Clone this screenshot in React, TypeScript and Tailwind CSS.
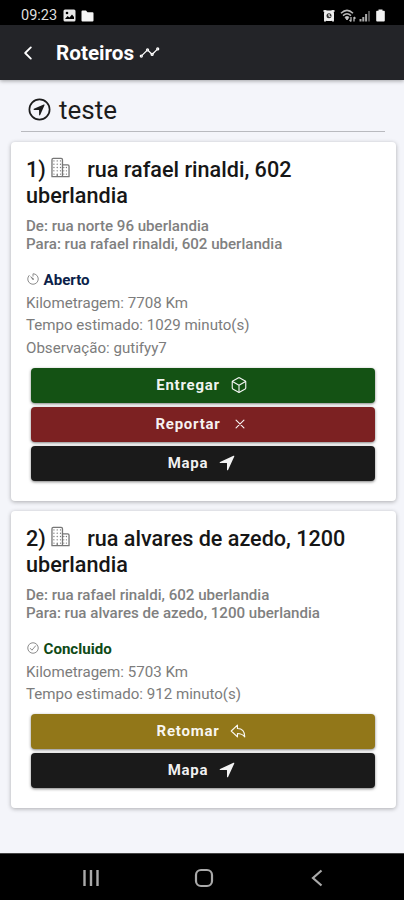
import clsx from "clsx";
import React from "react";
import {
  IoAnalyticsOutline,
  IoArrowUndoOutline,
  IoBusinessOutline,
  IoCheckmarkCircleOutline,
  IoChevronBack,
  IoCloseOutline,
  IoCubeOutline,
  IoNavigate,
  IoNavigateCircleOutline,
  IoTimerOutline,
} from "react-icons/io5";

interface IAction {
  label: string;
  icon: React.ReactNode;
  className: string;
}

interface IStop {
  address: string;
  from: string;
  to: string;
  status: string;
  statusIcon: React.ReactNode;
  statusClassName: string;
  details: string[];
  actions: IAction[];
}

const mapAction: IAction = {
  label: "Mapa",
  icon: <IoNavigate className="size-[18px]" />,
  className: "bg-[#1a1a1a]",
};

const stops: IStop[] = [
  {
    address: "rua rafael rinaldi, 602 uberlandia",
    from: "rua norte 96 uberlandia",
    to: "rua rafael rinaldi, 602 uberlandia",
    status: "Aberto",
    statusIcon: <IoTimerOutline className="-mt-0.5 size-[14px]" />,
    statusClassName: "text-[#0c1f4a]",
    details: [
      "Kilometragem: 7708 Km",
      "Tempo estimado: 1029 minuto(s)",
      "Observação: gutifyy7",
    ],
    actions: [
      {
        label: "Entregar",
        icon: <IoCubeOutline className="size-[18px]" />,
        className: "bg-[#145214]",
      },
      {
        label: "Reportar",
        icon: <IoCloseOutline className="size-[18px]" />,
        className: "bg-[#7c2122]",
      },
      mapAction,
    ],
  },
  {
    address: "rua alvares de azedo, 1200 uberlandia",
    from: "rua rafael rinaldi, 602 uberlandia",
    to: "rua alvares de azedo, 1200 uberlandia",
    status: "Concluido",
    statusIcon: <IoCheckmarkCircleOutline className="-mt-0.5 size-[14px]" />,
    statusClassName: "text-[#0e4a16]",
    details: ["Kilometragem: 5703 Km", "Tempo estimado: 912 minuto(s)"],
    actions: [
      {
        label: "Retomar",
        icon: <IoArrowUndoOutline className="size-[18px]" />,
        className: "bg-[#927719]",
      },
      mapAction,
    ],
  },
];

function StatusBar() {
  return (
    <div className="flex h-[25px] items-center bg-black pl-[21px] pr-[19px] pt-[6px] text-[#dedede]">
      <span className="w-[37px] whitespace-nowrap text-[14.5px] leading-[15px]">
        09:23
      </span>
      <svg className="ml-[5px]" width="13" height="13" viewBox="0 0 13 13">
        <rect x="0.5" y="0.5" width="12" height="12" rx="1.5" fill="#e6e6e6" />
        <circle cx="4" cy="4" r="1.3" fill="#000" />
        <path d="M2 10l2.5-3 2 1.5L9 5.5l2 2.5v2z" fill="#000" />
      </svg>
      <svg className="ml-[5px]" width="13" height="12" viewBox="0 0 13 12">
        <path
          d="M0.5 1.5q0-1 1-1H5l1.5 1.7h5q1 0 1 1v7.3q0 1-1 1h-10q-1 0-1-1z"
          fill="#f5f5f5"
        />
      </svg>
      <div className="ml-auto flex items-center">
        <svg width="12" height="13" viewBox="0 0 12 13">
          <path d="M0.500 1h3v2h-3zM8.500 1h3v2h-3zM1 10h2v2.500H1zM9 10h2v2.500H9z" fill="#ddd" />
          <rect x="1" y="1.500" width="10" height="10.500" rx="3" fill="#eee" />
          <circle cx="6" cy="6.800" r="2.500" fill="#333" />
          <path d="M6 5v2l1.500 0.800" stroke="#eee" strokeWidth="1.200" fill="none" />
        </svg>
        <svg className="ml-[5px]" width="16" height="14" viewBox="0 0 16 14" fill="none" stroke="#bbb">
          <path d="M1 4.200Q7 -1.500 13 4.200M3 6.600Q7 3 11 6.600" strokeWidth="1.500" />
          <path d="M5 8.200Q7 6.800 9 8.200L7 11z" fill="#ccc" />
          <path d="M11 8v4.500M9.500 11l1.500 1.500M14 12.500V8M15.500 9.500L14 8" strokeWidth="1.300" />
        </svg>
        <svg className="ml-[3px]" width="12" height="12" viewBox="0 0 12 12">
          <path d="M0.500 9h2v2.500h-2zM3.300 7h2v4.500h-2zM6.100 4h2v7.500h-2z" fill="#aaa" />
          <path d="M9 1h2v10.500H9z" fill="#555" />
        </svg>
        <svg className="ml-[5px]" width="9" height="13" viewBox="0 0 9 13">
          <path d="M2.500 0.500h4v1.300H8q0.800 0 0.800 0.800v9q0 0.900-0.900 0.900H1.100q-0.900 0-0.900-0.900v-9q0-0.800 0.800-0.800h1.500z" fill="#f2f2f2" />
        </svg>
      </div>
    </div>
  );
}

function Header() {
  return (
    <header className="relative z-10 flex h-[55px] items-center bg-[#232428] pl-[18px] text-white shadow-[0_1px_4px_rgba(0,0,0,0.35)]">
      <IoChevronBack className="size-5" />
      <h1 className="ml-[18px] pt-px text-[20.7px] font-bold leading-[22px]">
        Roteiros
      </h1>
      <IoAnalyticsOutline className="ml-[5px] size-[21px]" />
    </header>
  );
}

function StopCard({ stop, index }: { stop: IStop; index: number }) {
  return (
    <section className="rounded-[4px] bg-white px-[15px] pb-[20px] pt-[15px] shadow-[0_1px_4px_rgba(0,0,0,0.3)]">
      <h2 className="pr-4 text-[21.6px] font-medium leading-[26px] text-[#161616]">
        {`${index + 1}) `}
        <IoBusinessOutline className="-ml-px mr-[16px] inline-block size-[21px] align-[-1px] text-[#777]" />
        {stop.address}
      </h2>
      <div className="mt-[8px] whitespace-nowrap text-[15.1px] font-medium leading-[18px] text-[#808080]">
        <p>{`De: ${stop.from}`}</p>
        <p>{`Para: ${stop.to}`}</p>
      </div>
      <div className="mt-[16px] text-[15.1px] leading-[22.700px] text-[#7c7c7c]">
        <p className="flex items-center gap-[3.500px]">
          {stop.statusIcon}
          <span className={clsx("font-bold", stop.statusClassName)}>
            {stop.status}
          </span>
        </p>
        {stop.details.map((detail) => (
          <p key={detail}>{detail}</p>
        ))}
      </div>
      <div className="ml-[5px] mr-[6px] mt-[8px] flex flex-col gap-[4px]">
        {stop.actions.map((action) => (
          <button
            key={action.label}
            className={clsx(
              "flex h-[35px] items-center justify-center gap-[10px] rounded-[4px] pr-[2px] text-[15px] font-bold tracking-[0.75px] text-white/95 shadow-[0_1px_3px_rgba(0,0,0,0.5)]",
              action.className
            )}
          >
            {action.label}
            {action.icon}
          </button>
        ))}
      </div>
    </section>
  );
}

function NavigationBar() {
  return (
    <nav className="mt-auto flex h-[47px] items-center justify-between border-t border-[#444] bg-black pl-[82px] pr-[80px] pt-[2px] text-[#aaa]">
      <svg width="18" height="18" viewBox="0 0 18 18" stroke="currentColor" strokeWidth="2.4">
        <path d="M2.500 1v16M9 1v16M15.500 1v16" />
      </svg>
      <svg className="-ml-[3px]" width="20" height="20" viewBox="0 0 20 20" fill="none" stroke="currentColor" strokeWidth="2.2">
        <rect x="2" y="2" width="16" height="16" rx="5" />
      </svg>
      <svg width="14" height="18" viewBox="0 0 14 18" fill="none" stroke="currentColor" strokeWidth="2.2">
        <path d="M11.500 1.500L3 9l8.500 7.500" />
      </svg>
    </nav>
  );
}

export default function App() {
  return (
    <div className="flex h-[900px] w-full flex-col overflow-hidden bg-[#f4f5fa] font-[Roboto,sans-serif]">
      <StatusBar />
      <Header />
      <main>
        <div className="ml-[21px] mr-[19px] flex h-[52px] items-center border-b border-[#b9babf] pl-[5px] pt-[8px] text-[#1c1c1c]">
          <IoNavigateCircleOutline className="size-[27px]" />
          <span className="ml-[6px] text-[26px] leading-none">teste</span>
        </div>
        <div className="ml-[11px] mr-[8px] mt-[10px] flex flex-col gap-[10px]">
          {stops.map((stop, index) => (
            <StopCard key={stop.address} stop={stop} index={index} />
          ))}
        </div>
      </main>
      <NavigationBar />
    </div>
  );
}
